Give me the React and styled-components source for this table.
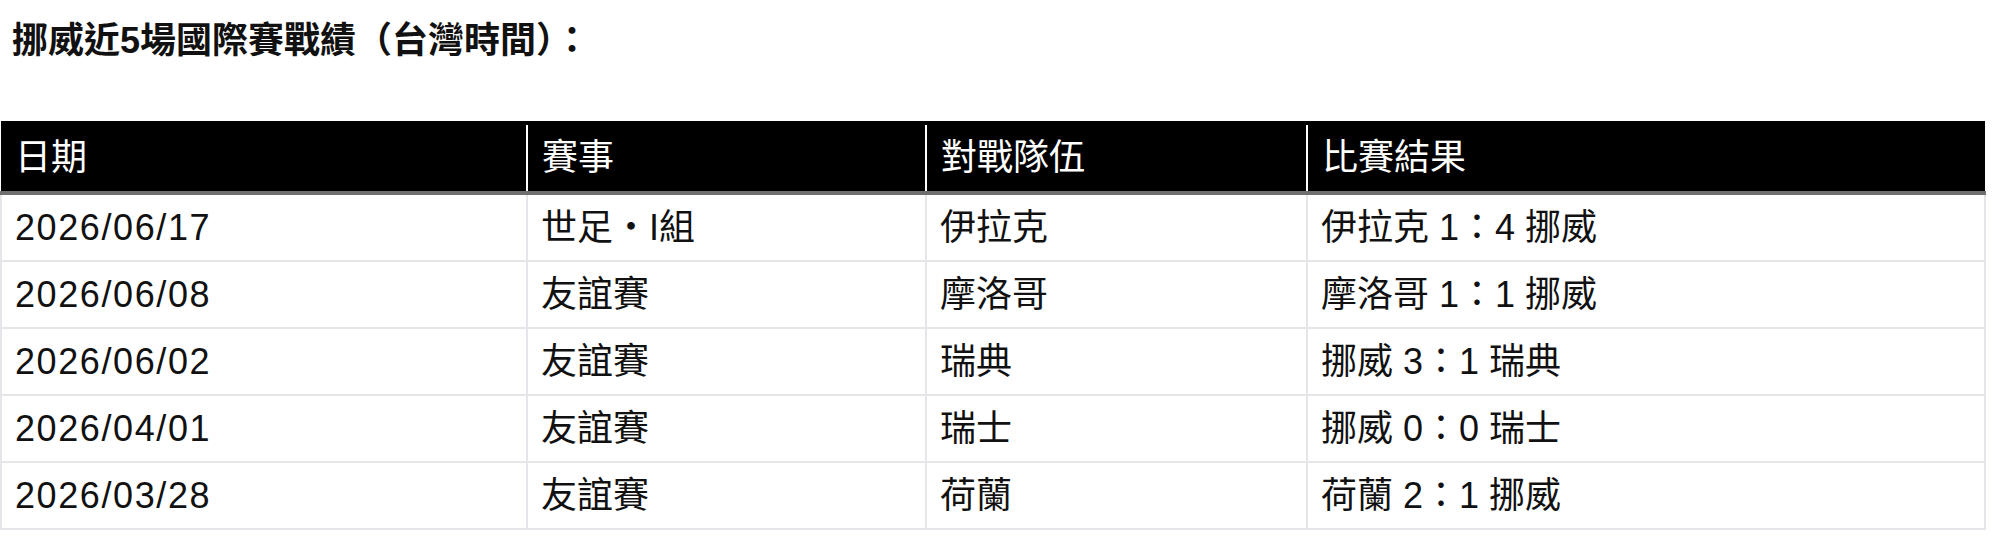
import styled, { createGlobalStyle } from "styled-components";

const GlobalStyle = createGlobalStyle`
  html, body {
    margin: 0;
    padding: 0;
    background: #fff;
  }
  body {
    font-family: "Liberation Sans", "Noto Sans CJK TC", sans-serif;
    color: #111;
  }
`;

const Page = styled.div`
  width: 1992px;
  padding-top: 21px;
`;

const Title = styled.h3`
  margin: 0 0 0 12px;
  font-size: 36px;
  line-height: 40px;
  font-weight: 700;
  color: #111;
`;

const Table = styled.table`
  margin-top: 60px;
  width: 1984px;
  border-collapse: collapse;
  table-layout: fixed;
`;

const HeadRow = styled.tr`
  background: #000;
  border-top: 4px solid #000;
  border-bottom: 4px solid #6f6f6f;
`;

const Th = styled.th`
  padding: 14px 14px 15px;
  font-size: 36px;
  line-height: 37px;
  font-weight: 400;
  color: #fff;
  text-align: left;
  border-left: 2px solid #fff;
  border-right: 2px solid #fff;

  &:first-child {
    border-left: none;
  }
  &:last-child {
    border-right: none;
  }
`;

const Td = styled.td`
  padding: 14px 13px;
  font-size: 36px;
  line-height: 37px;
  color: #111;
  border: 2px solid #e6e6ea;
  letter-spacing: ${(p) => (p.$spaced ? "1.6px" : "0")};
`;

const columns = [
  { label: "日期", width: 526 },
  { label: "賽事", width: 399 },
  { label: "對戰隊伍", width: 381 },
  { label: "比賽結果", width: 678 },
];

const matches = [
  ["2026/06/17", "世足・I組", "伊拉克", "伊拉克 1：4 挪威"],
  ["2026/06/08", "友誼賽", "摩洛哥", "摩洛哥 1：1 挪威"],
  ["2026/06/02", "友誼賽", "瑞典", "挪威 3：1 瑞典"],
  ["2026/04/01", "友誼賽", "瑞士", "挪威 0：0 瑞士"],
  ["2026/03/28", "友誼賽", "荷蘭", "荷蘭 2：1 挪威"],
];

export default function App() {
  return (
    <Page>
      <GlobalStyle />
      <Title>挪威近5場國際賽戰績（台灣時間）：</Title>
      <Table>
        <colgroup>
          {columns.map((c) => (
            <col key={c.label} style={{ width: c.width }} />
          ))}
        </colgroup>
        <thead>
          <HeadRow>
            {columns.map((c) => (
              <Th key={c.label}>{c.label}</Th>
            ))}
          </HeadRow>
        </thead>
        <tbody>
          {matches.map((row) => (
            <tr key={row[0]}>
              {row.map((cell, i) => (
                <Td key={i} $spaced={i === 0}>
                  {cell}
                </Td>
              ))}
            </tr>
          ))}
        </tbody>
      </Table>
    </Page>
  );
}
